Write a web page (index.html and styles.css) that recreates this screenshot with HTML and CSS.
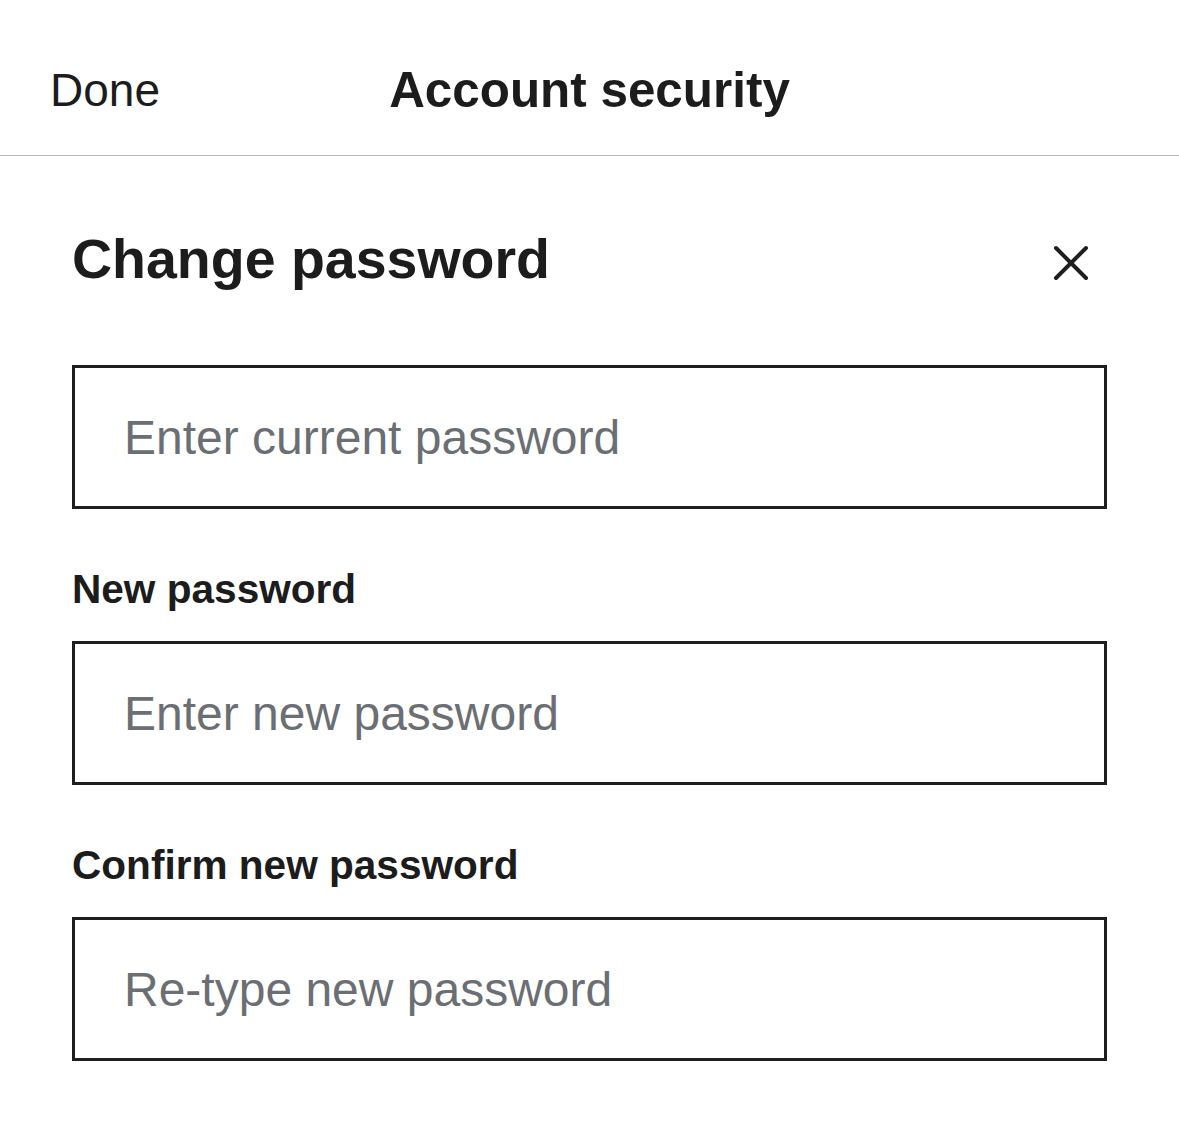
FILE: index.html
```html
<!DOCTYPE html>
<html lang="en">
<head>
<meta charset="utf-8">
<title>Account security</title>
<link rel="stylesheet" href="styles.css">
</head>
<body>
<header class="topbar">
  <a class="done" href="#">Done</a>
  <h1 class="title">Account security</h1>
  <span class="spacer"></span>
</header>
<main class="panel">
  <div class="panel-head">
    <h2 class="heading">Change password</h2>
    <button class="close" type="button" aria-label="Close">
      <svg width="40" height="40" viewBox="0 0 40 40" aria-hidden="true">
        <path d="M5 5 L35 35 M35 5 L5 35" stroke="#1f1f1f" stroke-width="4" fill="none" stroke-linecap="round"/>
      </svg>
    </button>
  </div>
  <input class="field first" type="password" placeholder="Enter current password">
  <label class="label">New password</label>
  <input class="field" type="password" placeholder="Enter new password">
  <label class="label">Confirm new password</label>
  <input class="field" type="password" placeholder="Re-type new password">
</main>
</body>
</html>
```

FILE: styles.css
```css
* { box-sizing: border-box; }
html, body {
  margin: 0;
  padding: 0;
  background: #ffffff;
}
body {
  font-family: "Liberation Sans", Arial, sans-serif;
  color: #1c1c1c;
}

.topbar {
  display: grid;
  grid-template-columns: 1fr auto 1fr;
  align-items: start;
  height: 156px;
  padding: 60px 50px 0 50px;
  border-bottom: 1px solid #b8b8b8;
}
.done {
  justify-self: start;
  font-size: 46px;
  line-height: 60px;
  color: #1c1c1c;
  text-decoration: none;
}
.title {
  margin: 0;
  font-size: 49.4px;
  line-height: 60px;
  font-weight: 700;
  color: #1c1c1c;
}

.panel {
  display: flex;
  flex-direction: column;
  padding: 68px 72px 0 72px;
}
.panel-head {
  display: flex;
  justify-content: space-between;
  align-items: flex-start;
  height: 70px;
}
.heading {
  margin: 0;
  font-size: 55.5px;
  line-height: 70px;
  font-weight: 700;
  color: #1c1c1c;
}
.close {
  margin: 19px 16px 0 0;
  padding: 0;
  border: 0;
  background: transparent;
  width: 40px;
  height: 40px;
  display: block;
}
.close svg { display: block; }

.field {
  display: block;
  width: 100%;
  height: 144px;
  margin: 27px 0 0 0;
  padding: 0 0 0 49px;
  border: 3px solid #1e1e1e;
  border-radius: 0;
  background: #ffffff;
  font-family: "Liberation Sans", Arial, sans-serif;
  font-size: 48px;
  color: #1c1c1c;
  outline: none;
}
.field.first { margin-top: 71px; }
.field::placeholder {
  color: #6b6e72;
  opacity: 1;
}

.label {
  display: block;
  margin-top: 55px;
  font-size: 40.6px;
  line-height: 50px;
  font-weight: 700;
  color: #1c1c1c;
}
```
